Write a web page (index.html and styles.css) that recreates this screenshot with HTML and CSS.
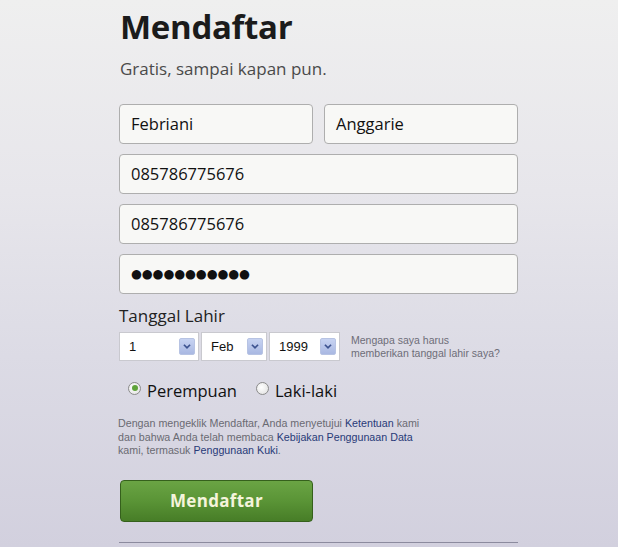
FILE: index.html
```html
<!DOCTYPE html>
<html lang="id">
<head>
<meta charset="utf-8">
<title>Mendaftar</title>
<link rel="stylesheet" href="styles.css">
</head>
<body>
<main class="signup">
  <h1 class="title">Mendaftar</h1>
  <p class="subtitle">Gratis, sampai kapan pun.</p>

  <div class="fields">
    <div class="row">
      <div class="field">Febriani</div>
      <div class="field">Anggarie</div>
    </div>
    <div class="field">085786775676</div>
    <div class="field">085786775676</div>
    <div class="field pw">●●●●●●●●●●●</div>
  </div>

  <div class="birth">
    <div class="birth-label">Tanggal Lahir</div>
    <div class="birth-row">
      <div class="select s-day"><span>1</span><i class="arrow"><svg viewBox="0 0 16 16" width="16" height="16"><path d="M4.5 6 L8 9.5 L11.5 6" fill="none" stroke="#3d5390" stroke-width="2"/></svg></i></div>
      <div class="select s-mon"><span>Feb</span><i class="arrow"><svg viewBox="0 0 16 16" width="16" height="16"><path d="M4.5 6 L8 9.5 L11.5 6" fill="none" stroke="#3d5390" stroke-width="2"/></svg></i></div>
      <div class="select s-year"><span>1999</span><i class="arrow"><svg viewBox="0 0 16 16" width="16" height="16"><path d="M4.5 6 L8 9.5 L11.5 6" fill="none" stroke="#3d5390" stroke-width="2"/></svg></i></div>
      <a class="why">Mengapa saya harus<br>memberikan tanggal lahir saya?</a>
    </div>
  </div>

  <div class="gender">
    <label class="radio"><span class="dot checked"></span>Perempuan</label>
    <label class="radio"><span class="dot"></span>Laki-laki</label>
  </div>

  <p class="terms">Dengan mengeklik Mendaftar, Anda menyetujui <a>Ketentuan</a> kami<br>dan bahwa Anda telah membaca <a>Kebijakan Penggunaan Data</a><br>kami, termasuk <a>Penggunaan Kuki</a>.</p>

  <button class="submit">Mendaftar</button>

  <hr class="rule">
</main>
</body>
</html>
```

FILE: styles.css
```css
html, body {
  margin: 0;
  padding: 0;
}
body {
  width: 618px;
  height: 547px;
  overflow: hidden;
  background: linear-gradient(180deg, #efefef 0%, #e7e6eb 35%, #dcdbe5 65%, #d2d0de 100%);
  font-family: "Open Sans", "DejaVu Sans", sans-serif;
  color: #1a1a1a;
}
.signup {
  width: 399px;
  padding-left: 119px;
  display: flex;
  flex-direction: column;
}
.title {
  margin: 4px 0 0 1px;
  font-size: 33px;
  font-weight: 700;
  line-height: 46px;
  color: #1b1b1b;
  letter-spacing: -0.3px;
}
.subtitle {
  margin: 8px 0 0 1px;
  font-size: 17px;
  line-height: 22px;
  color: #4a4a4a;
}
.fields {
  margin-top: 24px;
  display: flex;
  flex-direction: column;
  gap: 10px;
}
.row {
  display: flex;
  gap: 11px;
}
.row .field {
  flex: 1;
}
.field {
  box-sizing: border-box;
  height: 40px;
  border: 1px solid #aeaeae;
  border-radius: 4px;
  background: #f8f8f6;
  padding: 0 11px;
  font-size: 16.5px;
  line-height: 38px;
  color: #111;
}
.pw {
  font-family: "DejaVu Sans", sans-serif;
  font-size: 12.5px;
  letter-spacing: -0.1px;
}
.birth {
  margin-top: 10px;
}
.birth-label {
  font-size: 17px;
  line-height: 24px;
  color: #222;
}
.birth-row {
  margin-top: 4px;
  display: flex;
  align-items: center;
  gap: 2px;
}
.select {
  box-sizing: border-box;
  height: 29px;
  background: #fff;
  border: 1px solid #c9c9cf;
  display: flex;
  align-items: center;
  justify-content: space-between;
  padding: 0 3px 0 9px;
  font-family: "Liberation Sans", Arial, sans-serif;
  font-size: 13px;
  color: #111;
}
.s-day { width: 80px; }
.s-mon { width: 66px; }
.s-year { width: 71px; }
.arrow {
  display: block;
  width: 16px;
  height: 17px;
  box-sizing: border-box;
  border: 1px solid #b7c3e3;
  border-radius: 2px;
  background: linear-gradient(180deg, #c7d3f2 0%, #a9b8e2 100%);
}
.arrow svg {
  display: block;
  width: 14px;
  height: 15px;
}
.why {
  margin-left: 9px;
  font-family: "Liberation Sans", Arial, sans-serif;
  font-size: 10.5px;
  line-height: 13px;
  color: #6d6d78;
}
.gender {
  margin-top: 18px;
  margin-left: 9px;
  display: flex;
  gap: 19px;
  font-size: 16.5px;
  line-height: 24px;
  color: #111;
}
.radio {
  display: flex;
  align-items: center;
  gap: 6px;
}
.dot {
  box-sizing: border-box;
  width: 13px;
  height: 13px;
  border: 1px solid #8b8b8b;
  border-radius: 50%;
  background: radial-gradient(circle at 40% 40%, #ffffff 0%, #dedede 100%);
  margin-top: -6px;
  position: relative;
}
.dot.checked::after {
  content: "";
  position: absolute;
  left: 2.5px;
  top: 2.5px;
  width: 6px;
  height: 6px;
  border-radius: 50%;
  background: #5fa33a;
}
.terms {
  margin: 14px 0 0 -1px;
  font-family: "Liberation Sans", Arial, sans-serif;
  font-size: 10.7px;
  line-height: 13.5px;
  color: #6a6a72;
}
.terms a {
  color: #283a78;
}
.submit {
  margin-top: 22px;
  margin-left: 1px;
  width: 193px;
  height: 42px;
  border: 1px solid #35601c;
  border-radius: 4px;
  background: linear-gradient(180deg, #6aa444 0%, #5a9436 50%, #477d27 100%);
  color: #f4f4dc;
  font-family: "Open Sans", "DejaVu Sans", sans-serif;
  font-weight: 700;
  font-size: 17px;
  letter-spacing: 0.3px;
  padding: 0;
}
.rule {
  margin: 20px 0 0 0;
  width: 399px;
  border: 0;
  border-top: 1px solid #8c8b9e;
}
```
